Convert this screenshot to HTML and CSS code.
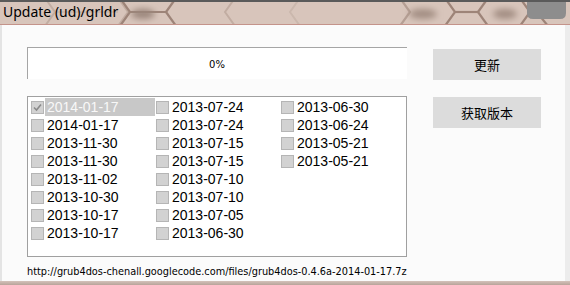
FILE: index.html
```html
<!DOCTYPE html>
<html>
<head>
<meta charset="utf-8">
<link rel="stylesheet" href="styles.css">
</head>
<body>
<div class="window">
  <div class="titlebar">
    <svg class="title-bg" width="570" height="24" viewBox="0 0 570 24">
      <defs>
        <filter id="blur" x="-50%" y="-50%" width="200%" height="200%"><feGaussianBlur stdDeviation="3"/></filter>
        <filter id="soft"><feGaussianBlur stdDeviation="0.6"/></filter>
      </defs>
      <rect width="570" height="24" fill="#d8c5bb"/>
      <g fill="none" stroke="#c2ada2" stroke-width="2" filter="url(#soft)">
        <polyline points="45,-2 55,12 45,26"/>
        <polyline points="118,-2 128,12 118,26"/>
        <polyline points="55,12 118,12" stroke="#ccb9ae"/>
        <polyline points="235,-2 225,12 235,26"/>
        <polyline points="300,-2 290,12 300,26" stroke="#cbb8ad"/>
      </g>
      <g fill="none" stroke="#9d8478" stroke-width="2.2" filter="url(#soft)">
        <polyline points="120,26 130,12 120,-2"/>
        <polyline points="130,12 166,12"/>
        <polyline points="166,12 176,-2"/>
        <polyline points="166,12 176,26"/>
        <polyline points="400,26 410,12 400,-2" stroke="#b59f94"/>
        <polyline points="445,-2 455,12 445,26"/>
        <polyline points="455,12 478,12"/>
        <polyline points="478,12 488,-2"/>
        <polyline points="478,12 488,26"/>
        <polyline points="520,-2 530,12 520,26"/>
        <polyline points="535,10 548,26"/>
      </g>
      <ellipse cx="143" cy="14" rx="12" ry="5" fill="#9a857a" filter="url(#blur)"/>
      <ellipse cx="423" cy="14" rx="14" ry="5" fill="#a28d82" filter="url(#blur)"/>
      <ellipse cx="505" cy="14" rx="12" ry="5" fill="#a28d82" filter="url(#blur)"/>
      <path d="M527 0 H566 V13 Q566 19 560 19 H533 Q527 19 527 13 Z" fill="#8d8d8d"/>
      <rect width="570" height="2" fill="#5a5a5a"/>
    </svg>
    <span class="title-text">Update (ud)/grldr</span>
  </div>
  <div class="title-line"></div>
  <div class="client">
    <div class="main">
      <div class="progress"><span>0%</span></div>
      <div class="list">
        <div class="item selected"><span class="cb checked"><svg width="11" height="11" viewBox="0 0 11 11"><path d="M2 5.5 L4.5 8 L9 2.5" fill="none" stroke="#8a8a8a" stroke-width="1.6"/></svg></span><span class="label">2014-01-17</span></div>
        <div class="item"><span class="cb"></span><span class="label">2014-01-17</span></div>
        <div class="item"><span class="cb"></span><span class="label">2013-11-30</span></div>
        <div class="item"><span class="cb"></span><span class="label">2013-11-30</span></div>
        <div class="item"><span class="cb"></span><span class="label">2013-11-02</span></div>
        <div class="item"><span class="cb"></span><span class="label">2013-10-30</span></div>
        <div class="item"><span class="cb"></span><span class="label">2013-10-17</span></div>
        <div class="item"><span class="cb"></span><span class="label">2013-10-17</span></div>
        <div class="item"><span class="cb"></span><span class="label">2013-07-24</span></div>
        <div class="item"><span class="cb"></span><span class="label">2013-07-24</span></div>
        <div class="item"><span class="cb"></span><span class="label">2013-07-15</span></div>
        <div class="item"><span class="cb"></span><span class="label">2013-07-15</span></div>
        <div class="item"><span class="cb"></span><span class="label">2013-07-10</span></div>
        <div class="item"><span class="cb"></span><span class="label">2013-07-10</span></div>
        <div class="item"><span class="cb"></span><span class="label">2013-07-05</span></div>
        <div class="item"><span class="cb"></span><span class="label">2013-06-30</span></div>
        <div class="item"><span class="cb"></span><span class="label">2013-06-30</span></div>
        <div class="item"><span class="cb"></span><span class="label">2013-06-24</span></div>
        <div class="item"><span class="cb"></span><span class="label">2013-05-21</span></div>
        <div class="item"><span class="cb"></span><span class="label">2013-05-21</span></div>
      </div>
      <div class="url">http://grub4dos-chenall.googlecode.com/files/grub4dos-0.4.6a-2014-01-17.7z</div>
    </div>
    <div class="side">
      <div class="btn">更新</div>
      <div class="btn">获取版本</div>
    </div>
  </div>
  <div class="bottom-frame"></div>
</div>
</body>
</html>
```
FILE: styles.css
```css
html, body {
  margin: 0;
  padding: 0;
  background: #fbfbfb;
}
.window {
  width: 570px;
  height: 285px;
  display: flex;
  flex-direction: column;
  overflow: hidden;
  background: #fbfbfb;
}
.titlebar {
  position: relative;
  height: 24px;
  flex: none;
}
.title-bg {
  position: absolute;
  left: 0;
  top: 0;
}
.title-text {
  position: relative;
  display: block;
  padding-left: 3px;
  font-family: "Noto Sans", "Open Sans", sans-serif;
  font-size: 14px;
  line-height: 24px;
  color: #000;
  padding-top: 0;
}
.title-line {
  height: 1px;
  flex: none;
  background: #c4938a;
}
.client {
  flex: 1;
  display: flex;
  border-left: 2px solid #e4e4e4;
  border-right: 5px solid #ececec;
  padding: 22px 0 0 25px;
}
.main {
  width: 380px;
  display: flex;
  flex-direction: column;
}
.progress {
  height: 32px;
  background: #ffffff;
  border-top: 1px solid #a5a5a5;
  border-left: 1px solid #a5a5a5;
  box-sizing: border-box;
  display: flex;
  align-items: center;
  justify-content: center;
  font-family: "DejaVu Sans", sans-serif;
  font-size: 10px;
  color: #000;
}
.progress span {
  margin-top: 1px;
  margin-left: -1px;
}
.list {
  margin-top: 17px;
  height: 161px;
  box-sizing: border-box;
  border: 1px solid #a0a0a0;
  background: #ffffff;
  padding: 1px 0 0 3px;
  display: grid;
  grid-template-rows: repeat(8, 18px);
  grid-auto-columns: 125px;
  grid-auto-flow: column;
  align-content: start;
}
.item {
  display: flex;
  align-items: center;
  height: 18px;
  font-family: "Liberation Sans", Arial, sans-serif;
  font-size: 14px;
  color: #000;
}
.cb {
  width: 11px;
  height: 11px;
  border: 1px solid #b5b5b5;
  background: #d2d2d2;
  flex: none;
  margin-right: 1px;
  display: flex;
}
.label {
  padding-left: 2px;
  width: 108px;
  line-height: 18px;
}
.selected .label {
  background: #c8c8c8;
  color: #f8f8f8;
}
.url {
  margin-top: 8px;
  font-family: "DejaVu Sans Condensed", "DejaVu Sans", sans-serif;
  font-size: 10.85px;
  color: #000;
  white-space: nowrap;
}
.side {
  margin-left: 26px;
  padding-top: 2px;
  display: flex;
  flex-direction: column;
  gap: 17px;
}
.btn {
  width: 108px;
  height: 31px;
  background: #dcdcdc;
  display: flex;
  align-items: center;
  justify-content: center;
  font-family: "Noto Sans CJK SC", sans-serif;
  font-size: 13px;
  color: #000;
}
.bottom-frame {
  height: 4px;
  flex: none;
  background: linear-gradient(#d4c2ba, #b8a49a);
}
```
